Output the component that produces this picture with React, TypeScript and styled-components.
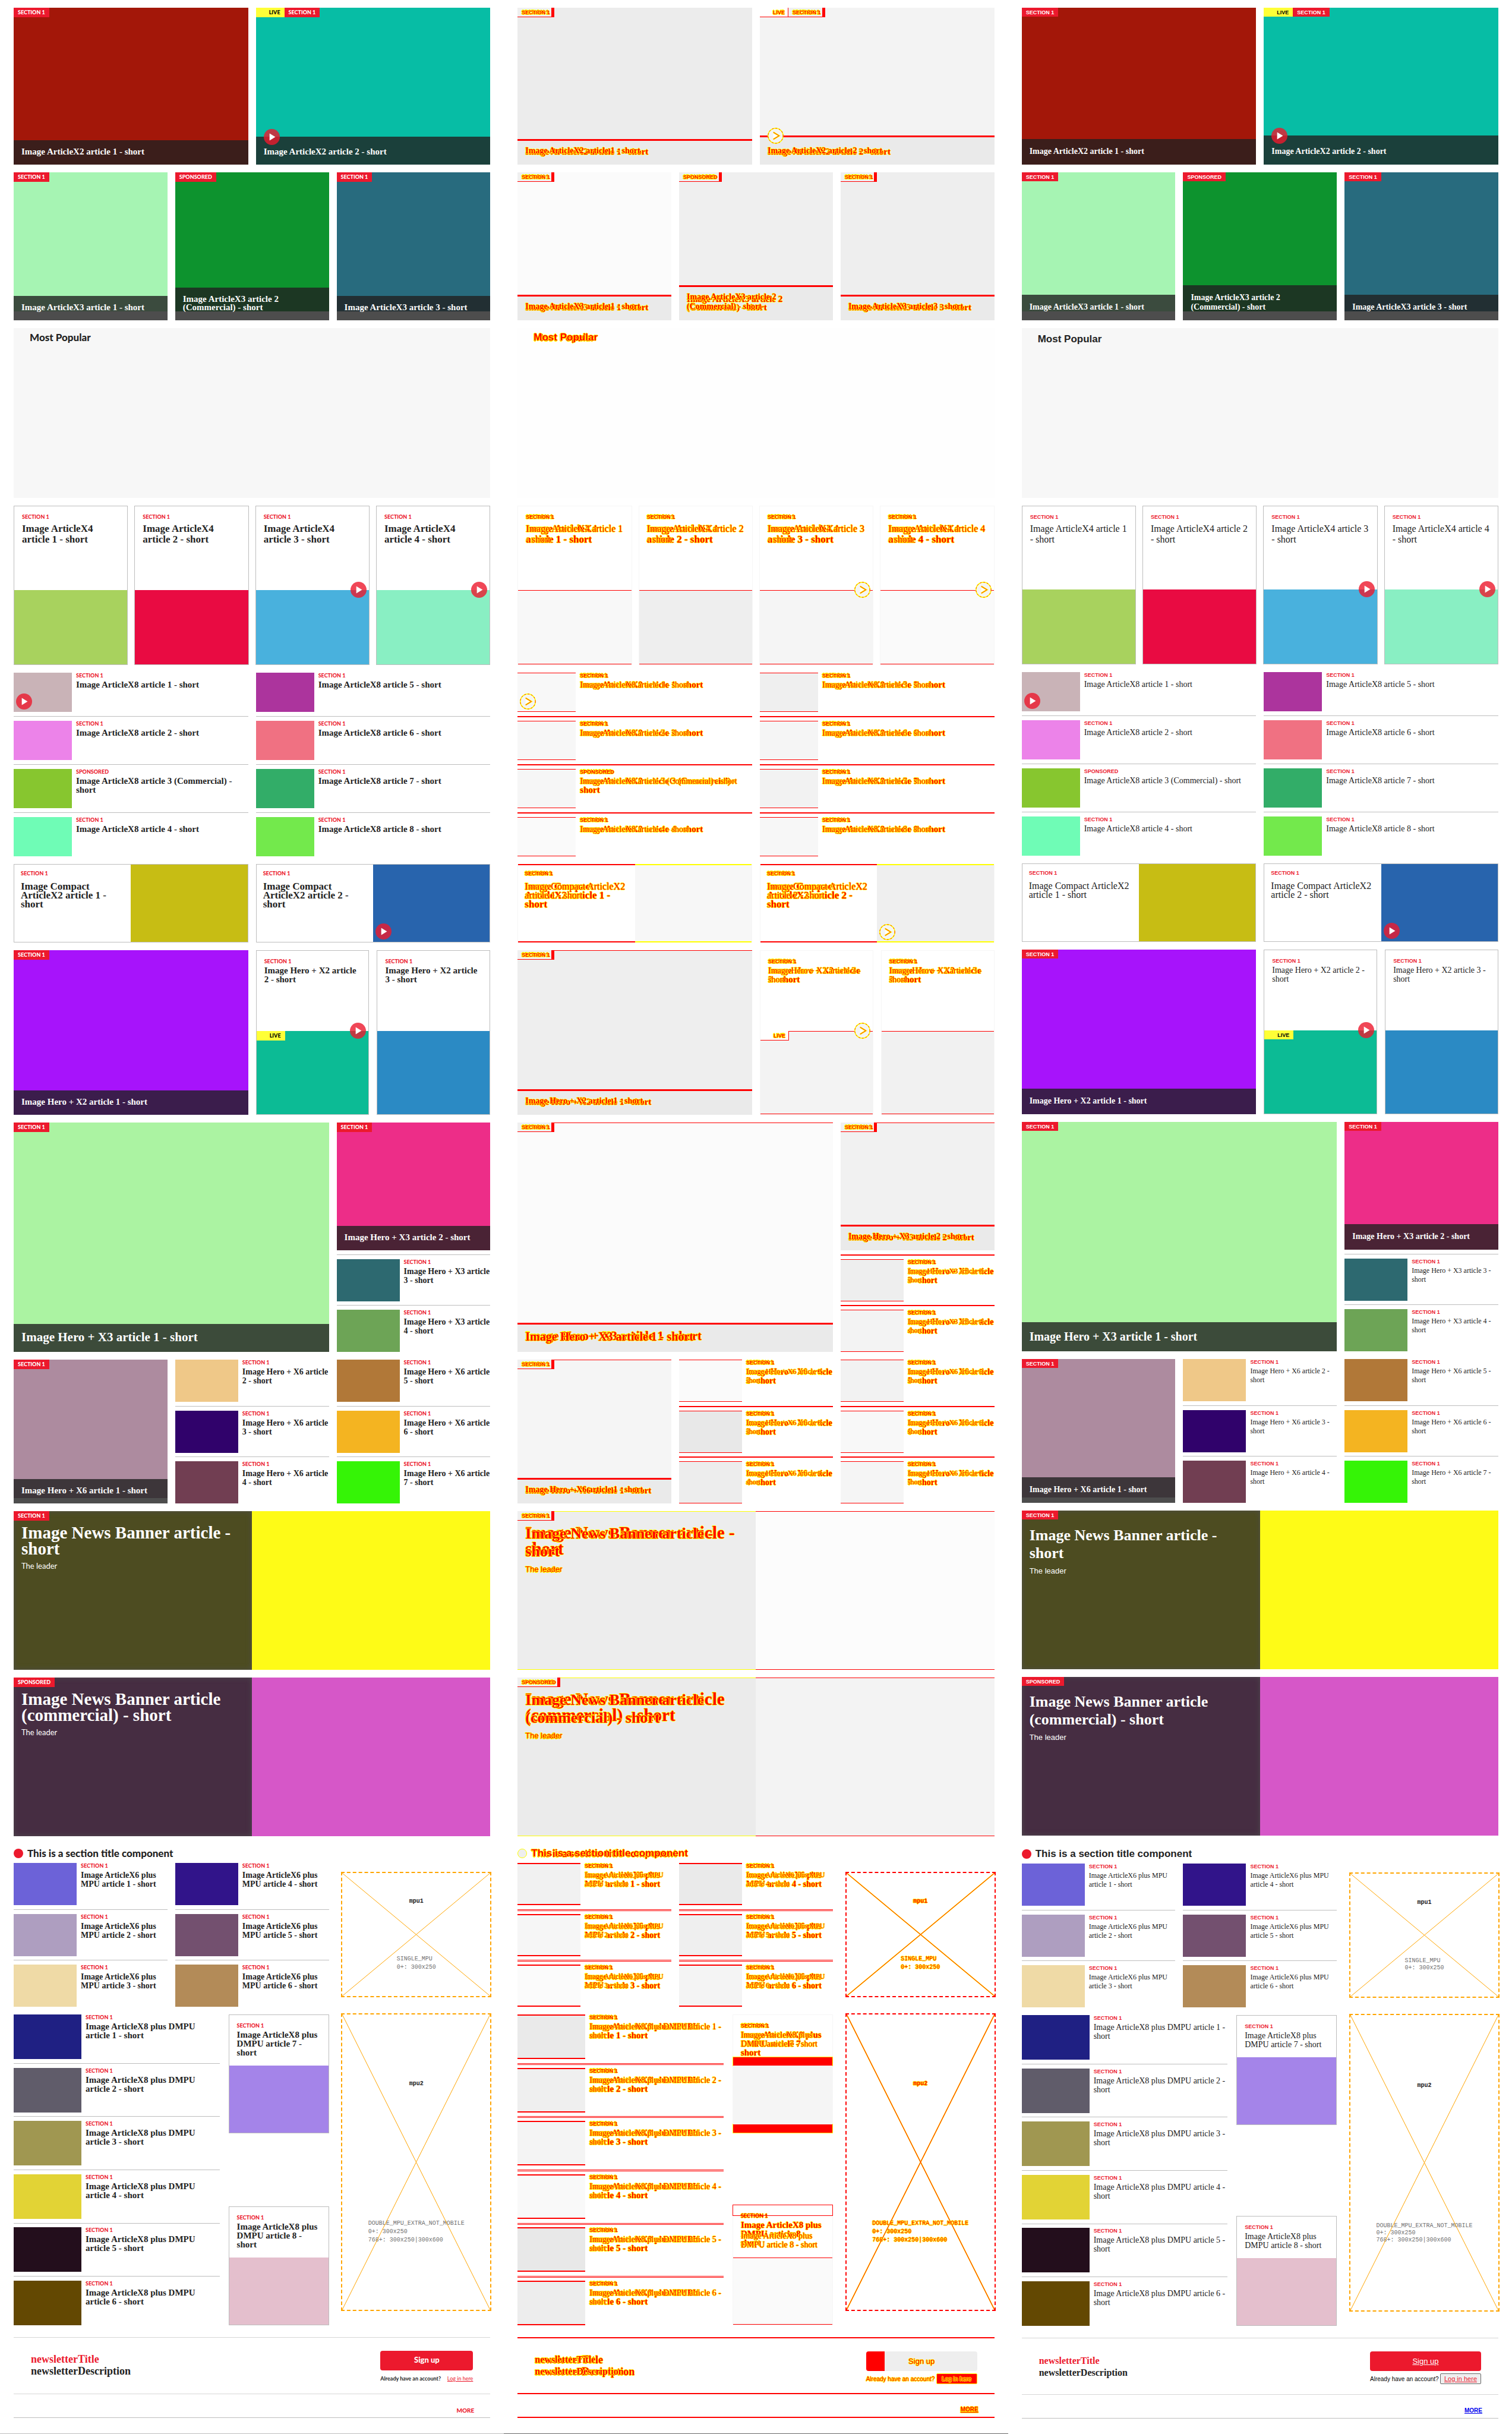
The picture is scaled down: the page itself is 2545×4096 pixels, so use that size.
import React, { createContext, useContext } from "react";
import styled, { createGlobalStyle, css, ThemeProvider } from "styled-components";

type Mode = "before" | "diff" | "after";
type Look = "before" | "after";
type Kind = "caption" | "captionLarge" | "feature" | "row" | "rowSmall" | "compact" | "banner";
type Pair = [string, string];

declare module "styled-components" {
  export interface DefaultTheme {
    mode: Mode;
  }
}

const brand = "#ec192d";
const line = "#bdbdbd";
const sans = '"Liberation Sans", Arial, sans-serif';
const humanist = 'Lato, "Open Sans", sans-serif';
const serif = '"Liberation Serif", "Times New Roman", serif';
const mono = '"Liberation Mono", "Courier New", monospace';

/* Unchanged pixels of the diff are washed out to a tenth of their contrast. */
const washed = (hex: string) => {
  const n = parseInt(hex.slice(1), 16);
  const y = 0.299 * (n >> 16) + 0.587 * ((n >> 8) & 255) + 0.114 * (n & 255);
  const v = Math.round(255 + (y - 255) * 0.1);
  return `rgb(${v}, ${v}, ${v})`;
};

const Global = createGlobalStyle`
  *, *::before, *::after { box-sizing: border-box; }
  body { margin: 0; background: #fff; color: #222; }
  h2, h3, p, ul { margin: 0; padding: 0; }
  ul { list-style: none; }
`;

const changed = css`
  color: #f00;
  text-shadow: 1px 0 #ff0, -1px 0 #ff0, 0 1px #ff0, 0 -1px #ff0;
`;

const Board = styled.main`
  display: grid;
  grid-template-columns: repeat(3, 1fr);
  min-height: 100vh;
`;

const Column = styled.section`
  display: flex;
  flex-direction: column;
  gap: 13px;
  min-width: 0;
  padding: 13px 23px 0;
  border-bottom: ${({ theme }) =>
    theme.mode === "after" ? "none" : `1px solid ${theme.mode === "diff" ? "#666" : line}`};
`;

const Stack = styled.div<{ $end?: boolean }>`
  display: grid;
  align-items: ${({ $end }) => ($end ? "end" : "start")};
  > * { grid-area: 1 / 1; }
`;

const sizes: Record<Kind, Record<Look, [number, number]>> = {
  caption: { before: [15, 14], after: [14, 16] },
  captionLarge: { before: [21, 20], after: [20, 22] },
  feature: { before: [17, 18], after: [16, 18] },
  row: { before: [15, 15], after: [14, 15] },
  rowSmall: { before: [14, 15], after: [12, 15] },
  compact: { before: [17, 15], after: [16, 15] },
  banner: { before: [29, 27], after: [26, 30] },
};
const onDark = (k: Kind) => k === "caption" || k === "captionLarge" || k === "banner";

const Heading = styled.h3<{ $kind: Kind; $look: Look }>`
  font-family: ${serif};
  font-size: ${({ $kind, $look }) => sizes[$kind][$look][0]}px;
  line-height: ${({ $kind, $look }) => sizes[$kind][$look][1]}px;
  font-weight: ${({ $kind, $look }) => ($look === "before" || onDark($kind) ? 700 : 400)};
  color: ${({ $kind }) => (onDark($kind) ? "#fff" : "#222")};
  white-space: pre-line;
  ${({ theme }) => theme.mode === "diff" && changed}
`;

const KickerText = styled.p<{ $look: Look }>`
  font-family: ${({ $look }) => ($look === "before" ? humanist : sans)};
  font-size: 9px;
  line-height: 10px;
  font-weight: ${({ $look }) => ($look === "before" ? 900 : 700)};
  color: ${brand};
  ${({ theme }) => theme.mode === "diff" && changed}
`;

const ModeContext = createContext<Mode>("before");

function Layers({ render, end }: { render: (look: Look) => React.ReactNode; end?: boolean }) {
  const mode = useContext(ModeContext);
  if (mode !== "diff") return <>{render(mode)}</>;
  return (
    <Stack $end={end}>
      {render("before")}
      {render("after")}
    </Stack>
  );
}

function Title({ kind, text }: { kind: Kind; text: Pair }) {
  return (
    <Layers
      end={kind === "caption"}
      render={(look) => (
        <Heading $kind={kind} $look={look}>
          {text[look === "before" ? 0 : 1]}
        </Heading>
      )}
    />
  );
}

function Kicker({ text = "SECTION 1" }: { text?: string }) {
  return <Layers render={(look) => <KickerText $look={look}>{text}</KickerText>} />;
}

/* ---------- pictures, badges, play marks ---------- */

const Picture = styled.div<{ $color: string; $edge?: number; $edgeColor?: string }>`
  position: relative;
  background: ${({ $color, theme }) => (theme.mode === "diff" ? washed($color) : $color)};
  ${({ theme, $edge = 0, $edgeColor = "#f00" }) =>
    theme.mode === "diff" &&
    $edge > 0 &&
    css`
      box-shadow: inset 0 ${$edge}px ${$edgeColor}, inset 0 -${$edge}px ${$edgeColor};
    `}
`;

const Badges = styled.div`
  position: absolute;
  top: 0;
  left: 0;
  z-index: 1;
  display: flex;
`;

const Badge = styled.div<{ $live?: boolean }>`
  padding: 0 7px 0 ${({ $live }) => ($live ? 22 : 7)}px;
  display: flex;
  align-items: center;
  height: ${({ theme }) => (theme.mode === "after" ? 15 : 16)}px;
  background: ${({ $live }) => ($live ? "#ffff37" : brand)};
  p { color: ${({ $live }) => ($live ? "#000" : "#fff")}; }
  ${({ theme, $live }) =>
    theme.mode === "diff" &&
    css`
      background: ${$live ? "#fff" : "#f0f0f0"};
      border-bottom: 1px solid #f00;
      border-right: ${$live ? 1 : 5}px solid #f00;
      padding-right: ${$live ? 5 : 2}px;
      p { color: #f00; }
    `}
`;

function Tags({ live, text }: { live?: boolean; text?: string }) {
  return (
    <Badges>
      {live && (
        <Badge $live>
          <Kicker text="LIVE" />
        </Badge>
      )}
      {text && (
        <Badge>
          <Kicker text={text} />
        </Badge>
      )}
    </Badges>
  );
}

type Spot = "captionTop" | "pictureTop" | "pictureBottom";
const spots: Record<Spot, ReturnType<typeof css>> = {
  captionTop: css`top: -13px; left: 13px;`,
  pictureTop: css`top: -14px; right: 4px;`,
  pictureBottom: css`bottom: 4px; left: 4px;`,
};

const PlaySvg = styled.svg<{ $spot: Spot }>`
  position: absolute;
  z-index: 1;
  width: 27px;
  height: 27px;
  ${({ $spot }) => spots[$spot]}
`;

function Play({ spot }: { spot: Spot }) {
  const mode = useContext(ModeContext);
  return (
    <PlaySvg $spot={spot} viewBox="0 0 32 32" aria-hidden="true">
      {mode === "diff" ? (
        <g fill="none">
          <circle cx="16" cy="16" r="15" fill="#f4f4f4" stroke="#ff0" strokeWidth="2" />
          <circle cx="16" cy="16" r="15" stroke="#f00" strokeWidth="1" strokeDasharray="3 4" />
          <path d="M11.5 9L23 16L11.5 23" fill="#fff" stroke="#ff0" strokeWidth="3" />
          <path d="M11.5 9L23 16L11.5 23" stroke="#f00" strokeWidth="1" />
        </g>
      ) : (
        <>
          <circle cx="16" cy="16" r="16" fill={brand} fillOpacity="0.8" />
          <path d="M11.5 9L23 16L11.5 23Z" fill="#fff" />
        </>
      )}
    </PlaySvg>
  );
}

/* ---------- tile: picture under a dark caption ---------- */

const TileBox = styled.article<{ $wide?: boolean; $height?: number }>`
  position: relative;
  display: grid;
  min-width: 0;
  grid-column: ${({ $wide }) => ($wide ? "span 2" : "auto")};
  min-height: ${({ $height }) => ($height ? `${$height}px` : "auto")};
  > * { grid-area: 1 / 1; }
`;

const TilePicture = styled(Picture)<{ $short?: number }>`
  margin-bottom: ${({ $short = 0 }) => $short}px;
`;

const Caption = styled.div<{ $live?: boolean }>`
  position: relative;
  align-self: end;
  background: rgba(32, 32, 32, 0.8);
  padding: ${({ theme, $live }) => (theme.mode === "after" ? 13 : 12) + ($live ? 6 : 0)}px 13px
    ${({ theme }) => (theme.mode === "after" ? 14 : 15)}px;
  ${({ theme }) =>
    theme.mode === "diff" &&
    css`
      background: #eaeaea;
      box-shadow: inset 0 3px #f00;
    `}
`;

interface TileProps {
  color: string;
  text: Pair;
  tag?: string;
  live?: boolean;
  large?: boolean;
  wide?: boolean;
  short?: number;
  height?: number;
  edge?: number;
}

function Tile({ color, text, tag = "SECTION 1", live, large, wide, short, height, edge }: TileProps) {
  return (
    <TileBox $wide={wide} $height={height}>
      <TilePicture $color={color} $short={short} $edge={edge} />
      <Tags live={live} text={tag} />
      <Caption $live={live}>
        {live && <Play spot="captionTop" />}
        <Title kind={large ? "captionLarge" : "caption"} text={text} />
      </Caption>
    </TileBox>
  );
}

/* ---------- bordered card: copy over picture ---------- */

const CardBox = styled.article`
  position: relative;
  display: flex;
  flex-direction: column;
  min-width: 0;
  border: 1px solid ${({ theme }) => (theme.mode === "diff" ? "#f6f6f6" : line)};
`;

const CardCopy = styled.div<{ $feature?: boolean; $joined?: boolean }>`
  flex: 1;
  display: flex;
  flex-direction: column;
  gap: ${({ $feature }) => ($feature ? 6 : 3)}px;
  padding: 13px 0 ${({ $joined }) => ($joined ? 0 : 14)}px 13px;
`;

const CardPicture = styled(Picture)<{ $tall: number }>`
  height: ${({ $tall }) => $tall}px;
`;

const ShiftBand = styled.div`
  height: 14px;
  background: #f00;
  box-shadow: 0 0 0 1px #ff0;
`;

interface CardProps {
  color: string;
  text: Pair;
  tall: number;
  feature?: boolean;
  play?: boolean;
  live?: boolean;
}

function Card({ color, text, tall, feature, play, live }: CardProps) {
  return (
    <CardBox>
      <CardCopy $feature={feature}>
        <Kicker />
        <Title kind={feature ? "feature" : "row"} text={text} />
      </CardCopy>
      <CardPicture $color={color} $tall={tall} $edge={1}>
        {live && <Tags live />}
        {play && <Play spot="pictureTop" />}
      </CardPicture>
    </CardBox>
  );
}

/* ---------- list of thumbnail rows ---------- */

const List = styled.ul`
  display: flex;
  flex-direction: column;
  justify-content: space-between;
  min-width: 0;
`;

const ListRow = styled.li`
  display: flex;
  gap: 7px;
`;

const Rule = styled.li<{ $double?: boolean }>`
  height: 1px;
  background: ${line};
  ${({ theme, $double }) =>
    theme.mode === "diff" &&
    css`
      background: #f00;
      box-shadow: ${$double ? "0 2px #f00, 0 1px #fff" : "0 1px #f00"};
    `}
`;

const thumbs = {
  small: [98, 66],
  medium: [106, 71],
  large: [114, 75],
};
type Thumb = keyof typeof thumbs;

const Thumbnail = styled(Picture)<{ $thumb: Thumb }>`
  flex: none;
  width: ${({ $thumb }) => thumbs[$thumb][0]}px;
  height: ${({ $thumb }) => thumbs[$thumb][1]}px;
`;

const RowCopy = styled.div`
  display: flex;
  flex-direction: column;
  gap: 3px;
  min-width: 0;
`;

interface Item {
  color: string;
  text: Pair;
  tag?: string;
  play?: boolean;
}

function Rows({ items, thumb, edge = 1 }: { items: Item[]; thumb: Thumb; edge?: number }) {
  return (
    <>
      {items.map((item, i) => (
        <React.Fragment key={item.color}>
          {i > 0 && <Rule $double={edge > 1} role="presentation" />}
          <ListRow>
            <Thumbnail $color={item.color} $thumb={thumb} $edge={edge}>
              {item.play && <Play spot="pictureBottom" />}
            </Thumbnail>
            <RowCopy>
              <Kicker text={item.tag} />
              <Title kind={thumb === "medium" ? "rowSmall" : "row"} text={item.text} />
            </RowCopy>
          </ListRow>
        </React.Fragment>
      ))}
    </>
  );
}

/* ---------- page rows ---------- */

const Grid = styled.div<{ $cols: string; $height: number; $gap?: number }>`
  display: grid;
  grid-template-columns: ${({ $cols }) => $cols};
  gap: ${({ $gap = 13 }) => $gap}px;
  min-height: ${({ $height }) => $height}px;
`;

const halves = "repeat(2, minmax(0, 1fr))";
const thirds = "repeat(3, minmax(0, 1fr))";
const quarters = "repeat(4, minmax(0, 1fr))";

const SansTitle = styled.h2<{ $look: Look }>`
  font-family: ${({ $look }) => ($look === "before" ? humanist : sans)};
  font-weight: ${({ $look }) => ($look === "before" ? 900 : 700)};
  font-size: 17px;
  line-height: 18px;
  ${({ theme }) => theme.mode === "diff" && changed}
`;

const Popular = styled.div`
  min-height: 286px;
  padding: ${({ theme }) => (theme.mode === "after" ? 10 : 7)}px 27px;
  background: ${({ theme }) => (theme.mode === "diff" ? "#fefefe" : "#f7f7f7")};
`;

const Compact = styled.article`
  display: grid;
  grid-template-columns: ${halves};
  border: 1px solid ${line};
  ${({ theme }) =>
    theme.mode === "diff" &&
    css`
      border-width: 0 1px;
      border-color: #f6f6f6;
    `}
`;

const CompactCopy = styled.div`
  display: flex;
  flex-direction: column;
  gap: 9px;
  padding: ${({ theme }) => (theme.mode === "diff" ? 11 : 10)}px 0 10px 11px;
  ${({ theme }) => theme.mode === "diff" && "box-shadow: inset 0 2px #f00, inset 0 -2px #f00;"}
`;

const Banner = styled.article`
  position: relative;
  display: grid;
  grid-template-columns: ${halves};
  min-height: 267px;
`;

const BannerCopy = styled(Picture)`
  display: flex;
  flex-direction: column;
  gap: 7px;
  padding: ${({ theme }) => (theme.mode === "after" ? 27 : 23)}px 13px 13px;
  ${({ theme }) => theme.mode !== "diff" && "box-shadow: inset 0 0 10px rgba(80, 80, 80, 0.8);"}
`;

const Leader = styled.p<{ $look: Look }>`
  font-family: ${({ $look }) => ($look === "before" ? humanist : sans)};
  font-size: 13px;
  line-height: 16px;
  color: #fff;
  ${({ theme }) => theme.mode === "diff" && changed}
`;

const SectionHead = styled.header`
  display: flex;
  align-items: center;
  gap: 7px;
  padding: ${({ theme }) => (theme.mode === "after" ? 9 : 7)}px 0 7px;
`;

const Dot = styled.span`
  width: 16px;
  height: 16px;
  border-radius: 50%;
  background: ${brand};
  ${({ theme }) => theme.mode === "diff" && "background: #eee; border: 1px solid #ff0;"}
`;

const Split = styled.div`
  grid-column: span 2;
  display: grid;
  grid-template-columns: minmax(0, 1fr) 169px;
  gap: 15px;
`;

const CardColumn = styled.div`
  display: flex;
  flex-direction: column;
  justify-content: space-between;
`;

const ShiftOutline = styled.div`
  position: absolute;
  inset: -1px -1px auto;
  height: 19px;
  border: 1px solid #f00;
`;

const Lowered = styled.div<{ $down: boolean }>`
  padding-top: ${({ $down }) => ($down ? 18 : 0)}px;
`;

/* ---------- advert slots ---------- */

const Slot = styled.aside<{ $tall?: boolean }>`
  position: relative;
  justify-self: end;
  width: 249px;
  height: ${({ $tall }) => ($tall ? 497 : 207)}px;
  margin-top: ${({ $tall }) => ($tall ? 0 : 17)}px;
  outline: 2px dashed ${({ theme }) => (theme.mode === "diff" ? "#f00" : "#ffa500")};
  display: flex;
  flex-direction: column;
  align-items: center;
  justify-content: space-around;
  font-family: ${mono};
  font-size: 10px;
`;

const Cross = styled.svg`
  position: absolute;
  inset: 0;
  width: 100%;
  height: 100%;
`;

const SlotName = styled.p`
  font-weight: 700;
  line-height: 14px;
  ${({ theme }) => theme.mode === "diff" && changed}
`;

const SlotInfo = styled.p`
  white-space: pre-line;
  color: #707070;
  line-height: ${({ theme }) => (theme.mode === "after" ? 12 : 14)}px;
  ${({ theme }) => theme.mode === "diff" && changed}
`;

function Mpu({ name, info, tall }: { name: string; info: string; tall?: boolean }) {
  const mode = useContext(ModeContext);
  const strokes = mode === "diff" ? [["#ff0", 2], ["#f00", 1]] : [["#ffa500", 1]];
  return (
    <Slot $tall={tall}>
      <Cross aria-hidden="true">
        {strokes.map(([stroke, width]) => (
          <g key={stroke} stroke={stroke as string} strokeWidth={width}>
            <line x1="0" y1="0" x2="100%" y2="100%" />
            <line x1="100%" y1="0" x2="0" y2="100%" />
          </g>
        ))}
      </Cross>
      <SlotName>{name}</SlotName>
      <SlotInfo>{info}</SlotInfo>
    </Slot>
  );
}

/* ---------- newsletter and footer ---------- */

const FooterBlock = styled.footer`
  margin-top: 7px;
`;

const ruleColor = ({ theme }: { theme: { mode: Mode } }) => (theme.mode === "diff" ? "#f00" : "#d6d6d6");

const Newsletter = styled.div`
  display: flex;
  justify-content: space-between;
  padding: 22px 29px 0;
  min-height: 96px;
  border-top: ${({ theme }) => (theme.mode === "diff" ? 2 : 1)}px solid ${ruleColor};
  border-bottom: ${({ theme }) => (theme.mode === "diff" ? 2 : 1)}px solid ${ruleColor};
`;

const Letter = styled.div`
  padding-top: ${({ theme }) => (theme.mode === "after" ? 6 : 4)}px;
`;

const LetterLine = styled.p<{ $look: Look; $lead?: boolean }>`
  font-family: ${serif};
  font-weight: 700;
  font-size: ${({ $look }) => ($look === "before" ? 18 : 16)}px;
  line-height: 20px;
  color: ${({ $lead }) => ($lead ? brand : "#222")};
  ${({ theme }) => theme.mode === "diff" && changed}
`;

const Join = styled.div`
  display: flex;
  flex-direction: column;
  gap: 4px;
  width: ${({ theme }) => (theme.mode === "before" ? 156 : 187)}px;
`;

const joinButton = css`
  display: flex;
  align-items: center;
  justify-content: center;
  height: 33px;
  padding: 0;
  border: 0;
  border-radius: 4px;
  background: ${brand};
  color: #fff;
  font-size: 13px;
`;
const JoinButton = styled.button`
  ${joinButton}
  font-family: ${humanist};
  font-weight: 900;
  padding-bottom: 3px;
`;
const JoinLink = styled.a`
  ${joinButton}
  font-family: ${sans};
`;
const JoinDiff = styled.div`
  ${joinButton}
  font-family: ${sans};
  background: linear-gradient(90deg, #f00 31px, #eee 31px);
  ${changed}
`;

const Account = styled.p`
  display: flex;
  align-items: center;
  justify-content: space-between;
  min-height: 18px;
  white-space: nowrap;
  font-family: ${({ theme }) => (theme.mode === "before" ? humanist : sans)};
  font-size: ${({ theme }) => (theme.mode === "before" ? 9 : 10)}px;
  font-weight: ${({ theme }) => (theme.mode === "before" ? 700 : 400)};
  color: ${({ theme }) => (theme.mode === "before" ? "#222" : "#000")};
  ${({ theme }) => theme.mode === "diff" && changed}
`;

const LoginLink = styled.a`
  color: ${brand};
  font-weight: 400;
`;
const LoginButton = styled.button`
  height: 18px;
  width: 69px;
  padding: 0;
  border: 1px solid #666;
  border-radius: 2px;
  background: #efefef;
  color: ${brand};
  font-family: ${sans};
  font-size: 11px;
  line-height: 14px;
  text-decoration: underline;
`;
const LoginDiff = styled.span`
  display: inline-flex;
  align-items: center;
  justify-content: center;
  height: 18px;
  width: 69px;
  border: 1px solid #ff0;
  border-radius: 2px;
  background: #f00;
`;

const More = styled.div`
  display: flex;
  justify-content: flex-end;
  align-items: flex-end;
  min-height: 40px;
  padding: 0 27px 5px;
  border-bottom: ${({ theme }) => (theme.mode === "diff" ? "2px solid #f00" : `1px solid ${line}`)};
`;

const MoreLink = styled.a<{ $look: Look }>`
  font-family: ${({ $look }) => ($look === "before" ? humanist : sans)};
  font-weight: ${({ $look }) => ($look === "before" ? 900 : 700)};
  font-size: 10px;
  line-height: 14px;
  color: ${({ $look }) => ($look === "before" ? brand : "#0000ee")};
  text-decoration: ${({ $look }) => ($look === "before" ? "none" : "underline")};
  ${({ theme }) => theme.mode === "diff" && changed}
`;

function SignUp() {
  const mode = useContext(ModeContext);
  if (mode === "before")
    return (
      <Join>
        <JoinButton type="button">Sign up</JoinButton>
        <Account>
          Already have an account? <LoginLink href="#login">Log in here</LoginLink>
        </Account>
      </Join>
    );
  if (mode === "after")
    return (
      <Join>
        <JoinLink href="#join">Sign up</JoinLink>
        <Account>
          Already have an account? <LoginButton type="button">Log in here</LoginButton>
        </Account>
      </Join>
    );
  return (
    <Join>
      <JoinDiff>Sign up</JoinDiff>
      <Account>
        Already have an account? <LoginDiff>Log in here</LoginDiff>
      </Account>
    </Join>
  );
}

/* ---------- content ---------- */

const same = (s: string): Pair => [s, s];

const x4: { color: string; play?: boolean }[] = [
  { color: "#a8d25e" },
  { color: "#e90b42" },
  { color: "#49b1dd", play: true },
  { color: "#89efc3", play: true },
];

const x8 = (
  [
    ["#c9b3b7", "#ec83e9", "#87c62f", "#6ffcb6"],
    ["#ac349d", "#f07182", "#32ad68", "#73e94c"],
  ] as string[][]
).map((column, c) =>
  column.map((color, r): Item => {
    const n = c * 4 + r + 1;
    return n === 3
      ? {
          color,
          tag: "SPONSORED",
          text: ["Image ArticleX8 article 3 (Commercial) -\nshort", "Image ArticleX8 article 3 (Commercial) - short"],
        }
      : { color, play: n === 1, text: same(`Image ArticleX8 article ${n} - short`) };
  })
);

const heroText = (set: string, n: number): Pair => [
  `Image Hero + ${set} article\n${n} - short`,
  `Image Hero + ${set} article ${n} -\nshort`,
];
const heroRows = (set: string, first: number, colors: string[]): Item[] =>
  colors.map((color, i) => ({ color, text: heroText(set, first + i) }));

const mpuRows = (first: number, colors: string[]): Item[] =>
  colors.map((color, i) => ({
    color,
    text: [
      `Image ArticleX6 plus\nMPU article ${first + i} - short`,
      `Image ArticleX6 plus MPU\narticle ${first + i} - short`,
    ],
  }));

const dmpuRows: Item[] = ["#1f2083", "#605c6a", "#a09751", "#e2d335", "#230e1c", "#634802"].map((color, i) => ({
  color,
  text: [
    `Image ArticleX8 plus DMPU\narticle ${i + 1} - short`,
    `Image ArticleX8 plus DMPU article ${i + 1} -\nshort`,
  ],
}));

const dmpuText = (n: number): Pair => [
  `Image ArticleX8 plus\nDMPU article ${n} -\nshort`,
  `Image ArticleX8 plus\nDMPU article ${n} - short`,
];

function NewsBanner({ tag, text, dark, color }: { tag: string; text: Pair; dark: string; color: string }) {
  return (
    <Banner>
      <Tags text={tag} />
      <BannerCopy $color={dark} $edge={1} $edgeColor="#ff0">
        <Title kind="banner" text={text} />
        <Layers render={(look) => <Leader $look={look}>The leader</Leader>} />
      </BannerCopy>
      <Picture $color={color} $edge={1} />
    </Banner>
  );
}

function DmpuCards() {
  const mode = useContext(ModeContext);
  if (mode !== "diff")
    return (
      <CardColumn>
        <Card color="#a484e9" text={dmpuText(7)} tall={113} />
        <Card color="#e4bfcd" text={dmpuText(8)} tall={113} />
      </CardColumn>
    );
  return (
    <CardColumn>
      <CardBox>
        <CardCopy $joined>
          <Kicker />
          <Title kind="row" text={dmpuText(7)} />
        </CardCopy>
        <ShiftBand />
        <CardPicture $color="#a484e9" $tall={99} />
        <ShiftBand />
      </CardBox>
      <CardBox>
        <ShiftOutline />
        <CardCopy>
          <KickerText $look="before">SECTION 1</KickerText>
          <Layers
            render={(look) => (
              <Lowered $down={look === "after"}>
                <Heading $kind="row" $look={look}>
                  {dmpuText(8)[look === "before" ? 0 : 1]}
                </Heading>
              </Lowered>
            )}
          />
        </CardCopy>
        <CardPicture $color="#e4bfcd" $tall={113} $edge={1} />
      </CardBox>
    </CardColumn>
  );
}

function FrontPage({ mode }: { mode: Mode }) {
  return (
    <ThemeProvider theme={{ mode }}>
      <ModeContext.Provider value={mode}>
        <Column>
          <Grid $cols={halves} $height={264}>
            <Tile color="#a31709" text={same("Image ArticleX2 article 1 - short")} />
            <Tile color="#07bda5" live text={same("Image ArticleX2 article 2 - short")} />
          </Grid>

          <Grid $cols={thirds} $height={249}>
            <Tile color="#a6f4b3" short={15} text={same("Image ArticleX3 article 1 - short")} />
            <Tile
              color="#0d932e"
              short={15}
              tag="SPONSORED"
              text={same("Image ArticleX3 article 2\n(Commercial) - short")}
            />
            <Tile color="#286b7e" short={15} text={same("Image ArticleX3 article 3 - short")} />
          </Grid>

          <Popular>
            <Layers render={(look) => <SansTitle $look={look}>Most Popular</SansTitle>} />
          </Popular>

          <Grid $cols={quarters} $gap={11} $height={mode === "after" ? 267 : 268}>
            {x4.map((card, i) => (
              <Card
                key={card.color}
                feature
                color={card.color}
                play={card.play}
                tall={125}
                text={[`Image ArticleX4\narticle ${i + 1} - short`, `Image ArticleX4 article ${i + 1}\n- short`]}
              />
            ))}
          </Grid>

          <Grid $cols={halves} $height={309}>
            {x8.map((items) => (
              <List key={items[0].color}>
                <Rows items={items} thumb="small" />
              </List>
            ))}
          </Grid>

          <Grid $cols={halves} $height={132}>
            {["#c7bd14", "#2864ad"].map((color, i) => (
              <Compact key={color}>
                <CompactCopy>
                  <Kicker />
                  <Title
                    kind="compact"
                    text={[
                      `Image Compact\nArticleX2 article ${i + 1} -\nshort`,
                      `Image Compact ArticleX2\narticle ${i + 1} - short`,
                    ]}
                  />
                </CompactCopy>
                <Picture $color={color} $edge={2} $edgeColor="#ff0">
                  {i === 1 && <Play spot="pictureBottom" />}
                </Picture>
              </Compact>
            ))}
          </Grid>

          <Grid $cols={halves} $height={277}>
            <Tile color="#a713fb" edge={1} text={same("Image Hero + X2 article 1 - short")} />
            <Grid $cols={halves} $height={277}>
              <Card color="#0cbb95" live play tall={140} text={heroText("X2", 2)} />
              <Card color="#2b8ac4" tall={140} text={heroText("X2", 3)} />
            </Grid>
          </Grid>

          <Grid $cols={thirds} $height={386}>
            <Tile wide large edge={1} color="#abf3a2" text={same("Image Hero + X3 article 1 - short")} />
            <List>
              <li>
                <Tile height={215} edge={1} color="#ed2d88" text={same("Image Hero + X3 article 2 - short")} />
              </li>
              <Rule role="presentation" />
              <Rows items={heroRows("X3", 3, ["#2d6970", "#6da456"])} thumb="medium" />
            </List>
          </Grid>

          <Grid $cols={thirds} $height={242}>
            <Tile short={9} edge={1} color="#ad8b9f" text={same("Image Hero + X6 article 1 - short")} />
            <List>
              <Rows items={heroRows("X6", 2, ["#efc888", "#30026b", "#713e52"])} thumb="medium" />
            </List>
            <List>
              <Rows items={heroRows("X6", 5, ["#b17838", "#f4b421", "#35f406"])} thumb="medium" />
            </List>
          </Grid>

          <NewsBanner
            tag="SECTION 1"
            dark="#4d4c21"
            color="#fefb17"
            text={same("Image News Banner article -\nshort")}
          />
          <NewsBanner
            tag="SPONSORED"
            dark="#462d42"
            color="#d657c8"
            text={same("Image News Banner article\n(commercial) - short")}
          />

          <div>
            <SectionHead>
              <Dot />
              <Layers render={(look) => <SansTitle $look={look}>This is a section title component</SansTitle>} />
            </SectionHead>
            <Grid $cols={thirds} $height={242}>
              <List>
                <Rows items={mpuRows(1, ["#6c62d8", "#ae9ec0", "#efdaa6"])} thumb="medium" edge={2} />
              </List>
              <List>
                <Rows items={mpuRows(4, ["#31148a", "#73506f", "#b38b58"])} thumb="medium" edge={2} />
              </List>
              <Mpu name="mpu1" info={"SINGLE_MPU\n0+: 300x250"} />
            </Grid>
          </div>

          <Grid $cols={thirds} $height={523}>
            <Split>
              <List>
                <Rows items={dmpuRows} thumb="large" edge={2} />
              </List>
              <DmpuCards />
            </Split>
            <Mpu tall name="mpu2" info={"DOUBLE_MPU_EXTRA_NOT_MOBILE\n0+: 300x250\n768+: 300x250|300x600"} />
          </Grid>

          <FooterBlock>
            <Newsletter>
              <Letter>
                <Layers
                  render={(look) => (
                    <div>
                      <LetterLine $look={look} $lead>
                        newsletterTitle
                      </LetterLine>
                      <LetterLine $look={look}>newsletterDescription</LetterLine>
                    </div>
                  )}
                />
              </Letter>
              <SignUp />
            </Newsletter>
            <More>
              <Layers
                render={(look) => (
                  <MoreLink $look={look} href="#more">
                    MORE
                  </MoreLink>
                )}
              />
            </More>
          </FooterBlock>
        </Column>
      </ModeContext.Provider>
    </ThemeProvider>
  );
}

export default function App() {
  return (
    <>
      <Global />
      <Board>
        <FrontPage mode="before" />
        <FrontPage mode="diff" />
        <FrontPage mode="after" />
      </Board>
    </>
  );
}
